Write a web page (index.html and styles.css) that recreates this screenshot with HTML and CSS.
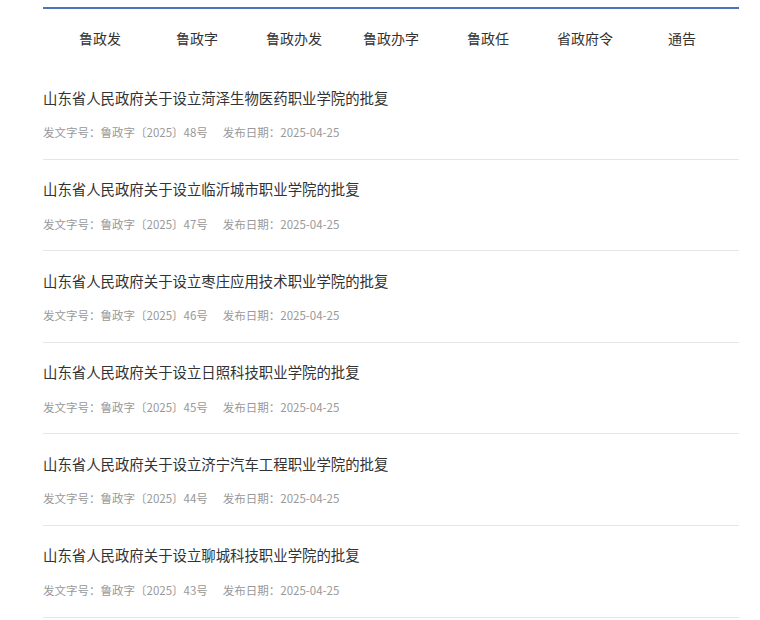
FILE: index.html
```html
<!DOCTYPE html>
<html lang="zh-CN">
<head>
    <meta charset="UTF-8">
    <meta name="viewport" content="width=device-width, initial-scale=1.0">
    <title>政府文件</title>
    <link rel="stylesheet" href="styles.css">
</head>
<body>

    <div class="container">
        <!-- 分类导航 -->
        <ul class="tabs">
            <li><a href="#">鲁政发</a></li>
            <li><a href="#">鲁政字</a></li>
            <li><a href="#">鲁政办发</a></li>
            <li><a href="#">鲁政办字</a></li>
            <li><a href="#">鲁政任</a></li>
            <li><a href="#">省政府令</a></li>
            <li><a href="#">通告</a></li>
        </ul>

        <!-- 文件列表 -->
        <ul class="doc-list">
            <li class="doc-item">
                <a class="doc-title" href="#">山东省人民政府关于设立菏泽生物医药职业学院的批复</a>
                <p class="doc-meta"><span>发文字号：鲁政字〔2025〕48号</span><span>发布日期：2025-04-25</span></p>
            </li>
            <li class="doc-item">
                <a class="doc-title" href="#">山东省人民政府关于设立临沂城市职业学院的批复</a>
                <p class="doc-meta"><span>发文字号：鲁政字〔2025〕47号</span><span>发布日期：2025-04-25</span></p>
            </li>
            <li class="doc-item">
                <a class="doc-title" href="#">山东省人民政府关于设立枣庄应用技术职业学院的批复</a>
                <p class="doc-meta"><span>发文字号：鲁政字〔2025〕46号</span><span>发布日期：2025-04-25</span></p>
            </li>
            <li class="doc-item">
                <a class="doc-title" href="#">山东省人民政府关于设立日照科技职业学院的批复</a>
                <p class="doc-meta"><span>发文字号：鲁政字〔2025〕45号</span><span>发布日期：2025-04-25</span></p>
            </li>
            <li class="doc-item">
                <a class="doc-title" href="#">山东省人民政府关于设立济宁汽车工程职业学院的批复</a>
                <p class="doc-meta"><span>发文字号：鲁政字〔2025〕44号</span><span>发布日期：2025-04-25</span></p>
            </li>
            <li class="doc-item">
                <a class="doc-title" href="#">山东省人民政府关于设立聊城科技职业学院的批复</a>
                <p class="doc-meta"><span>发文字号：鲁政字〔2025〕43号</span><span>发布日期：2025-04-25</span></p>
            </li>
        </ul>
    </div>

</body>
</html>
```

FILE: styles.css
```css
/* General Styling */
body {
    font-family: "Microsoft YaHei", "Noto Sans CJK SC", sans-serif;
    background: #fff;
    color: #333;
    margin: 0;
    padding: 0;
}
ul {
    list-style: none;
    margin: 0;
    padding: 0;
}
a {
    color: #333;
    text-decoration: none;
}
.container {
    width: 696px;
    margin: 7px 0 0 43px;
}
/* Tabs */
.tabs {
    display: flex;
    justify-content: center;
    border-top: 2px solid #4677b8;
    padding-bottom: 1px;
}
.tabs li {
    width: 97px;
    text-align: center;
    line-height: 58px;
    font-size: 14px;
}
/* Document list */
.doc-item {
    padding: 17.5px 0 16.6px;
    border-bottom: 1px solid #e6e6e6;
}
.doc-title {
    display: block;
    font-size: 14.4px;
    line-height: 24px;
}
.doc-meta {
    margin: 12.5px 0 0;
    font-size: 11.5px;
    line-height: 20px;
    color: #999;
}
.doc-meta span {
    margin-right: 15px;
}
```
